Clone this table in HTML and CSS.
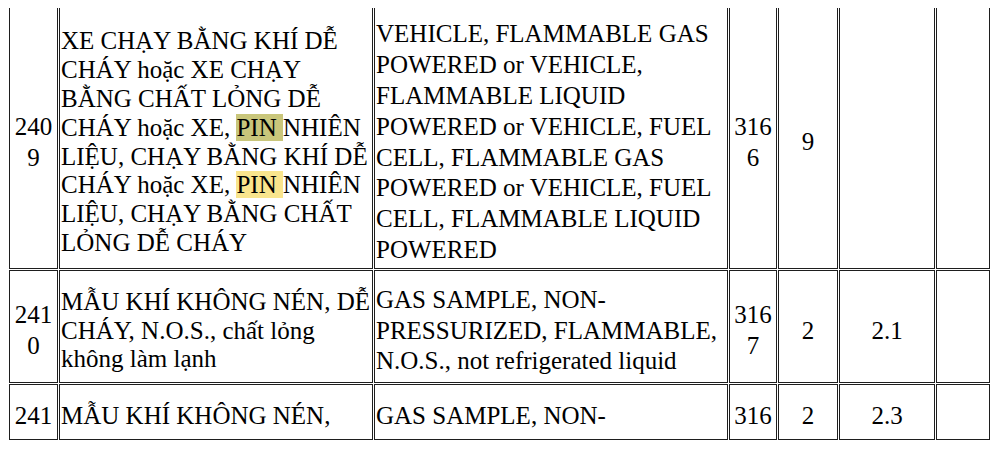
FILE: index.html
```html
<!DOCTYPE html>
<html lang="vi">
<head>
<meta charset="utf-8">
<title>Bảng hàng nguy hiểm</title>
<link rel="stylesheet" href="styles.css">
</head>
<body>
<table class="goods">
  <colgroup>
    <col class="c-no">
    <col class="c-vi">
    <col class="c-en">
    <col class="c-un">
    <col class="c-cls">
    <col class="c-sub">
    <col class="c-extra">
  </colgroup>
  <tbody>
    <tr class="r-prev">
      <td class="num"></td>
      <td class="txt">(XE ĐẠP ĐIỆN, XE MÁY)</td>
      <td class="txt">engine, fuel cell, (flammable gas)</td>
      <td class="num"></td>
      <td class="num"></td>
      <td class="num"></td>
      <td class="num"></td>
    </tr>
    <tr class="r-2409">
      <td class="num">2409</td>
      <td class="txt vi">XE CHẠY BẰNG KHÍ DỄ CHÁY hoặc XE CHẠY BẰNG CHẤT LỎNG DỄ CHÁY hoặc XE, <span class="hl hl-active">PIN </span>NHIÊN LIỆU, CHẠY BẰNG KHÍ DỄ CHÁY hoặc XE, <span class="hl">PIN </span>NHIÊN LIỆU, CHẠY BẰNG CHẤT LỎNG DỄ CHÁY</td>
      <td class="txt en">VEHICLE, FLAMMABLE GAS POWERED or VEHICLE, FLAMMABLE LIQUID POWERED or VEHICLE, FUEL CELL, FLAMMABLE GAS POWERED or VEHICLE, FUEL CELL, FLAMMABLE LIQUID POWERED</td>
      <td class="num">3166</td>
      <td class="num">9</td>
      <td class="num"></td>
      <td class="num"></td>
    </tr>
    <tr class="r-2410">
      <td class="num">2410</td>
      <td class="txt vi">MẪU KHÍ KHÔNG NÉN, DỄ CHÁY, N.O.S., chất lỏng không làm lạnh</td>
      <td class="txt en">GAS SAMPLE, NON-PRESSURIZED, FLAMMABLE, N.O.S., not refrigerated liquid</td>
      <td class="num">3167</td>
      <td class="num">2</td>
      <td class="num">2.1</td>
      <td class="num"></td>
    </tr>
    <tr class="r-2411">
      <td class="num">241</td>
      <td class="txt vi">MẪU KHÍ KHÔNG NÉN,</td>
      <td class="txt en">GAS SAMPLE, NON-</td>
      <td class="num">316</td>
      <td class="num">2</td>
      <td class="num">2.3</td>
      <td class="num"></td>
    </tr>
  </tbody>
</table>
</body>
</html>
```

FILE: styles.css
```css
html, body {
  background: #ffffff;
}

body {
  margin: 8px;
  overflow: hidden;
  font-family: "Liberation Serif", "Times New Roman", serif;
  color: #000000;
}

.goods {
  margin-top: -43px;
  width: 983px;
  table-layout: fixed;
  border-collapse: separate;
  border-spacing: 1px;
  font-size: 25px;
  line-height: 30.9px;
}

.c-no { width: 49px; }
.c-vi { width: 314px; }
.c-en { width: 354px; }
.c-un { width: 48px; }
.c-cls { width: 60px; }
.c-sub { width: 96px; }
.c-extra { width: 54px; }

.goods td {
  box-sizing: border-box;
  border: 1px solid #1e1e1e;
  padding: 9px 1px 0 1px;
  vertical-align: middle;
}

.goods td.num {
  text-align: center;
  word-break: break-all;
}

.goods td.txt {
  text-align: left;
}

.goods td.vi {
  line-height: 28.8px;
}

.r-prev { height: 40px; }
.r-prev td { vertical-align: bottom; padding-top: 0; }
.r-2409 { height: 262px; }
.r-2410 { height: 113px; }
.r-2411 { height: 56px; }

.hl {
  background: #c9c67b;
}

.hl:not(.hl-active) {
  background: #f9e58d;
}
```
